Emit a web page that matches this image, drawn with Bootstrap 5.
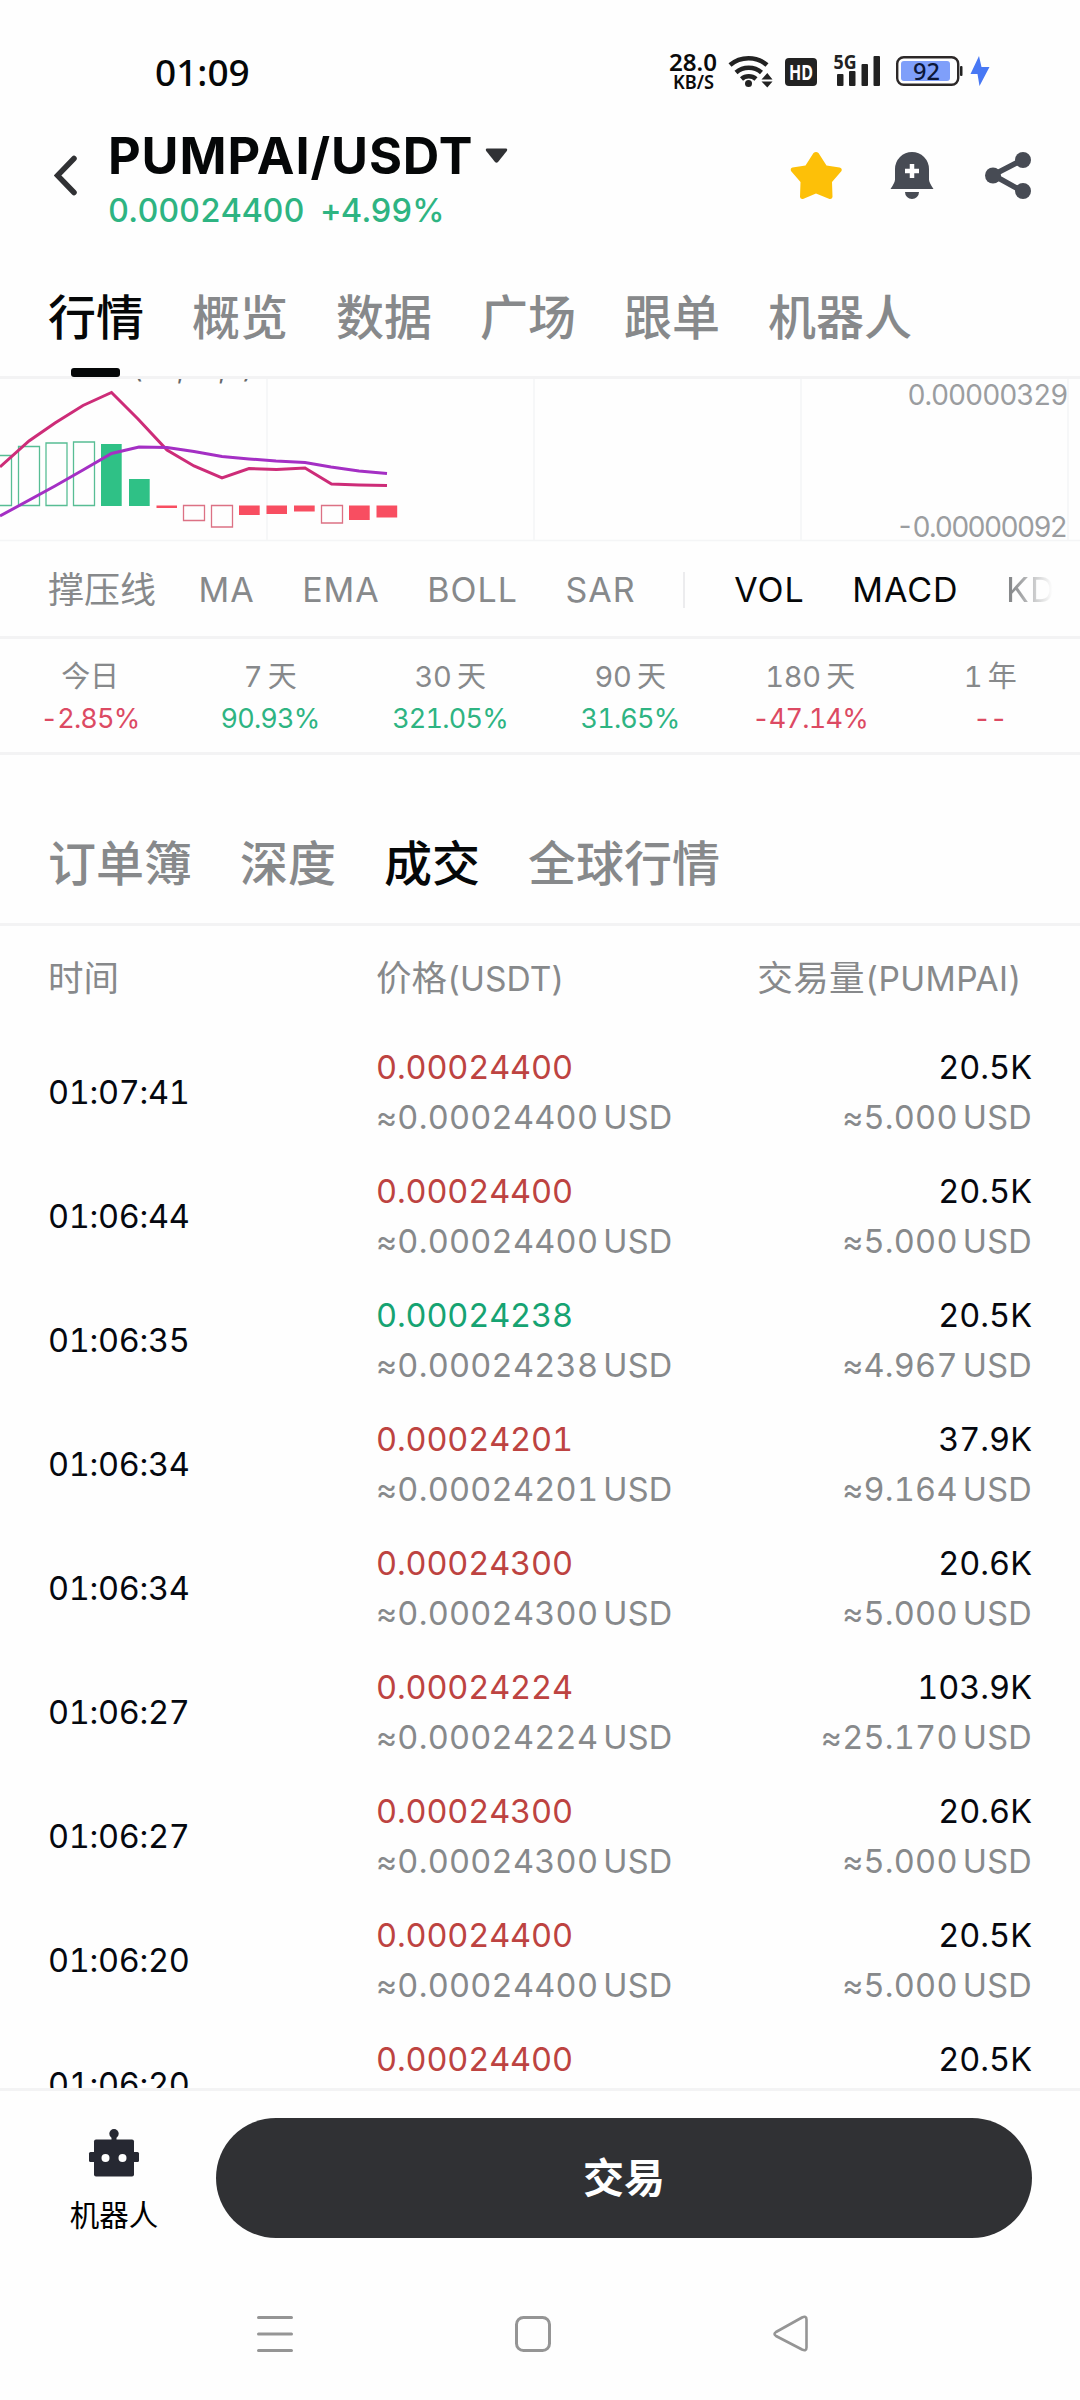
<!DOCTYPE html>
<html lang="zh-CN">
<head>
<meta charset="utf-8">
<meta name="viewport" content="width=device-width, initial-scale=1">
<title>PUMPAI/USDT</title>
<link href="https://cdn.jsdelivr.net/npm/bootstrap@5.3.0/dist/css/bootstrap.min.css" rel="stylesheet">
<style>
body{width:1080px;height:2400px;overflow:hidden;background:#fefefe;color:#050708;font-family:Inter,"Noto Sans CJK SC",sans-serif;font-variant-numeric:tabular-nums;line-height:1;white-space:nowrap}
svg{display:block;flex:none}
.up{color:#2eb482}.down{color:#dc4a63}
.muted{color:#87898b}
.rule{border-bottom:3px solid #f3f3f4}
.status{height:126px;padding:29px 91px 0 155px;font-family:"Noto Sans",sans-serif}
.clock{font-size:37px;font-weight:500;line-height:85px}
.head{height:126px;padding:0 48px 0 54px}
.pair{font-size:50.5px;font-weight:700;line-height:60px;letter-spacing:.9px}
.quote{font-size:32.5px;font-weight:500;line-height:40px;padding-top:5px;letter-spacing:-.2px}
.tabs{height:127px;padding-left:48px;gap:48px;font-size:48px;font-weight:500}
.tabs span{line-height:132px;position:relative}
.tabs .on::after{content:"";position:absolute;left:23px;top:116px;width:49px;height:9px;border-radius:3px;background:#050708}
.on{color:#050708}
.chart{height:163px}
.inds{height:97px;padding:2px 0 0 48px;gap:47.5px;font-size:34px;letter-spacing:1px}
.inds .zh{font-size:36px;letter-spacing:0;margin-right:-5px}
.inds .sep{width:2px;height:36px;background:#ececee;margin-right:1.5px}
.fade-end{background:linear-gradient(90deg,#87898b 10%,#fefefe 95%);-webkit-background-clip:text;background-clip:text;color:transparent}
.periods{height:116px;font-size:27px;padding-top:17px}
.periods .zh{font-size:29px;line-height:42px;letter-spacing:-.3px;word-spacing:-2px}
.periods .pct{line-height:42px;letter-spacing:-.8px}
.tabs.books{height:171px}
.books span{line-height:217px}
.books .on::after{display:none}
.trades{height:1162px;overflow:hidden}
.thead-line{height:113px;font-size:33.5px;line-height:106px}
.thead-line .zh{font-size:35.5px}
.thead-line .c3{letter-spacing:.4px;padding-right:10px}
.trade{height:124px;font-size:32.5px}
.c1{width:376px;padding-left:48px}.c2{width:330px}.c3{width:326px;text-align:right}
.trade .c1{line-height:108px;letter-spacing:-.3px}
.trade .c2,.trade .c3{line-height:50px;padding-top:4px}
.trade .muted{letter-spacing:.25px;word-spacing:-4px}
.trade .c1,.trade .amt{color:#05080f}
.sell,.buy{letter-spacing:-.15px}
.sell{color:#bd4341}.buy{color:#16a372}
.foot{height:179px;padding:27px 48px 0 0}
.bot{width:216px;padding:11px 0 0 12px;font-size:29.5px}
.go{height:120px;background:#303134;color:#fff;font-size:41px;font-weight:700;line-height:120px}
.go:hover{background:#303134;color:#fff}
.sysnav{height:129px}
</style>
</head>
<body>
<div class="status d-flex align-items-start">
  <div class="clock me-auto">01:09</div>
  <svg width="325" height="60" viewBox="664 30 325 60" overflow="visible" font-family="Noto Sans" fill="#222">
    <g fill="#0b0b0b" font-weight="600"><text x="669" y="72" font-size="23.500" textLength="48" lengthAdjust="spacingAndGlyphs">28.0</text><text x="673" y="90" font-size="19" textLength="41" lengthAdjust="spacingAndGlyphs">KB/S</text></g>
    <g fill="none" stroke="#222" stroke-width="4.6"><path d="M730 66a28.500 28.500 0 0 1 37 0"/><path d="M736 73.500a19.500 19.500 0 0 1 25.500 0"/><path d="M741.500 80a11 11 0 0 1 14.500 0"/></g>
    <circle cx="748.500" cy="84.500" r="3.500"/><path d="M761.500 80.500l5.800-6.500 5.200 6.500zM761.500 82.500l5.800 6 5.200-6z"/>
    <rect x="785" y="59" width="32" height="28" rx="4"/><text x="789" y="81" font-size="21" font-weight="700" fill="#fff" textLength="24" lengthAdjust="spacingAndGlyphs">HD</text>
    <text x="833.500" y="70" font-size="20" font-weight="700" textLength="23" lengthAdjust="spacingAndGlyphs">5G</text>
    <rect x="837" y="75" width="6.500" height="12" rx="1"/><rect x="849" y="72" width="6.500" height="15" rx="1"/><rect x="861.500" y="65" width="6.500" height="22" rx="1"/><rect x="873.500" y="57" width="6.500" height="30" rx="1"/>
    <rect x="897.200" y="58.200" width="61" height="27.600" rx="6.500" fill="none" stroke="#2c2828" stroke-width="2.400"/><rect x="901" y="62" width="49" height="20" rx="3" fill="#7f9ffa"/><rect x="960" y="67" width="2.500" height="10" rx="1"/>
    <text x="913" y="81" font-size="23.500" fill="#0c1738" font-weight="500">92</text>
    <path d="M979 57l-8.500 18h7l2 12 10-19h-8z" fill="#4878f4"/>
  </svg>
</div>
<div class="head d-flex align-items-start">
  <svg width="54" height="126" viewBox="54 126 54 126"><path d="M74 158.500L57.500 175.500 74 192.500" fill="none" stroke="#303134" stroke-width="5.500" stroke-linecap="round"/></svg>
  <div class="me-auto">
    <div class="d-flex align-items-center"><span class="pair">PUMPAI/USDT</span><svg class="ms-2" width="28" height="16" viewBox="-4 0 28 16"><path d="M2 .5h19q2 .5.8 2.500L13 14q-1.500 1.500-3 0L1.200 3Q0 1 2 .5z" fill="#303134"/></svg></div>
    <div class="quote up d-flex"><span>0.00024400</span><span class="ms-3">+4.99%</span></div>
  </div>
  <svg width="242" height="126" viewBox="790 126 242 126" fill="#474b54">
    <path d="M813.500 153q2.500-2 5 0l8 12.500 13 2q3 .8 2 3.500l-9.500 11 .5 15q-.5 2.500-3 2l-13.500-5.500-13 5.500q-2.500.5-3-2l.5-15-9.500-11q-1-2.700 1.500-3.500l13-2z" fill="#fdc008"/>
    <path d="M895 169a17 17 0 0 1 34 0v10.500q0 3 4.500 9.500h-43q4.500-6.500 4.500-9.500zM905 192h14a7 7 0 0 1-14 0z"/><path d="M912 164v14M905 171h14" stroke="#fff" stroke-width="4.500"/>
    <path d="M1022 160l-29 15 29 16" fill="none" stroke="#474b54" stroke-width="5.500"/><circle cx="1023" cy="160" r="8"/><circle cx="993" cy="175.500" r="8"/><circle cx="1023" cy="191" r="8"/>
  </svg>
</div>
<div class="tabs rule d-flex muted"><span class="on">行情</span><span>概览</span><span>数据</span><span>广场</span><span>跟单</span><span>机器人</span></div>
<div class="chart">
  <svg width="1080" height="163" viewBox="0 379 1080 163">
    <path d="M267 379V541M534 379V541M801 379V541M1068 379V541M0 540.500H1080" stroke="#f4f5f6" stroke-width="1.500"/>
    <text x="52" y="378.500" font-size="27" fill="#66686a" textLength="201">MACD(12,26,9)</text>
    <g fill="none" stroke="#57bd94" stroke-width="1.300"><path d="M-9.500 455.500h21v50h-21zM18.500 446.500h21v59h-21zM46 443h21v62.500H46zM73.500 442h21v63.500h-21z"/></g>
    <path d="M101 444h20.700v62H101zM129 479h20.700v27H129z" fill="#2fc186"/>
    <path d="M156.500 505.500h20.500v2.500h-20.500zM239 505.500h20.700v9.500H239zM266.500 505.500h20.500v8.500h-20.500zM294 505.500h20.700v6H294zM349 505.500h20.700V520H349zM376.500 505.500h20.700v12h-20.700z" fill="#f84e61"/>
    <path d="M183.500 505.500h21v15h-21zM211.500 505.500h21V527h-21zM321.500 505.500h21V523h-21z" fill="none" stroke="#dc7184" stroke-width="1.300"/>
    <g fill="none" stroke-width="3"><path stroke="#cd2c78" d="M0 467L29 441 55 423 83 405.500 111.500 392.500 138 419 167 450 194 466 222 478 249 468.500 276.500 469.500 305 468 331.500 484 359 485 387 485.500"/><path stroke="#a42fc4" d="M0 516L55 486 83 470 111.500 453.500 139 447 167 447.500 194 451.500 222 456.500 249 459 276 461 305 462.500 331 467 359 471 387 473.500"/></g>
    <g fill="#9b9da0" font-size="28"><text x="907.500" y="404.700" textLength="161">0.00000329</text><text x="896" y="537" textLength="172">-0.00000092</text></g>
  </svg>
</div>
<div class="inds rule d-flex align-items-center muted"><span class="zh">撑压线</span><span>MA</span><span>EMA</span><span>BOLL</span><span>SAR</span><i class="sep"></i><span class="on">VOL</span><span class="on">MACD</span><span class="fade-end">KD</span></div>
<div class="periods rule d-flex text-center muted">
  <div class="col"><div class="zh">今日</div><div class="pct down">-2.85%</div></div>
  <div class="col"><div class="zh">7 天</div><div class="pct up">90.93%</div></div>
  <div class="col"><div class="zh">30 天</div><div class="pct up">321.05%</div></div>
  <div class="col"><div class="zh">90 天</div><div class="pct up">31.65%</div></div>
  <div class="col"><div class="zh">180 天</div><div class="pct down">-47.14%</div></div>
  <div class="col"><div class="zh">1 年</div><div class="pct down">--</div></div>
</div>
<div class="tabs books rule d-flex muted"><span>订单簿</span><span>深度</span><span class="on">成交</span><span>全球行情</span></div>
<div class="trades">
  <div class="thead-line d-flex muted"><div class="c1"><span class="zh">时间</span></div><div class="c2"><span class="zh">价格</span>(USDT)</div><div class="c3"><span class="zh">交易量</span>(PUMPAI)</div></div>
  <div class="trade d-flex"><div class="c1">01:07:41</div><div class="c2"><div class="sell">0.00024400</div><div class="muted">≈0.00024400 USD</div></div><div class="c3"><div class="amt">20.5K</div><div class="muted">≈5.000 USD</div></div></div>
  <div class="trade d-flex"><div class="c1">01:06:44</div><div class="c2"><div class="sell">0.00024400</div><div class="muted">≈0.00024400 USD</div></div><div class="c3"><div class="amt">20.5K</div><div class="muted">≈5.000 USD</div></div></div>
  <div class="trade d-flex"><div class="c1">01:06:35</div><div class="c2"><div class="buy">0.00024238</div><div class="muted">≈0.00024238 USD</div></div><div class="c3"><div class="amt">20.5K</div><div class="muted">≈4.967 USD</div></div></div>
  <div class="trade d-flex"><div class="c1">01:06:34</div><div class="c2"><div class="sell">0.00024201</div><div class="muted">≈0.00024201 USD</div></div><div class="c3"><div class="amt">37.9K</div><div class="muted">≈9.164 USD</div></div></div>
  <div class="trade d-flex"><div class="c1">01:06:34</div><div class="c2"><div class="sell">0.00024300</div><div class="muted">≈0.00024300 USD</div></div><div class="c3"><div class="amt">20.6K</div><div class="muted">≈5.000 USD</div></div></div>
  <div class="trade d-flex"><div class="c1">01:06:27</div><div class="c2"><div class="sell">0.00024224</div><div class="muted">≈0.00024224 USD</div></div><div class="c3"><div class="amt">103.9K</div><div class="muted">≈25.170 USD</div></div></div>
  <div class="trade d-flex"><div class="c1">01:06:27</div><div class="c2"><div class="sell">0.00024300</div><div class="muted">≈0.00024300 USD</div></div><div class="c3"><div class="amt">20.6K</div><div class="muted">≈5.000 USD</div></div></div>
  <div class="trade d-flex"><div class="c1">01:06:20</div><div class="c2"><div class="sell">0.00024400</div><div class="muted">≈0.00024400 USD</div></div><div class="c3"><div class="amt">20.5K</div><div class="muted">≈5.000 USD</div></div></div>
  <div class="trade d-flex"><div class="c1">01:06:20</div><div class="c2"><div class="sell">0.00024400</div></div><div class="c3"><div class="amt">20.5K</div></div></div>
</div>
<div class="rule"></div>
<div class="foot d-flex">
  <div class="bot d-flex flex-column align-items-center">
    <svg width="52" height="48" viewBox="0 0 52 48"><path d="M26 4v10" stroke="#262832" stroke-width="5"/><circle cx="26" cy="4.700" r="4.700" fill="#262832"/><rect x="6" y="10.500" width="40" height="37" rx="2" fill="#262832"/><rect x="1" y="23" width="50" height="10" rx="1.500" fill="#262832"/><circle cx="17.500" cy="29" r="4" fill="#fff"/><circle cx="34.500" cy="29" r="4" fill="#fff"/></svg>
    <span class="mt-4 text-black">机器人</span>
  </div>
  <button class="btn go rounded-pill flex-fill p-0 border-0">交易</button>
</div>
<div class="sysnav">
  <svg width="1080" height="129" viewBox="0 2270 1080 129" fill="none" stroke="#959595" stroke-width="3" stroke-linecap="round" stroke-linejoin="round"><path d="M258.500 2317.500h33M258.500 2334h33M258.500 2350.500h33"/><rect x="516.500" y="2317.500" width="33" height="33" rx="7"/><path stroke-width="2.600" d="M776 2332l26-14.500q4.500-2 4.500 2v28q0 4-4.500 2L776 2336q-3-2 0-4z"/></svg>
</div>
<script src="https://cdn.jsdelivr.net/npm/bootstrap@5.3.0/dist/js/bootstrap.bundle.min.js"></script>
</body>
</html>
